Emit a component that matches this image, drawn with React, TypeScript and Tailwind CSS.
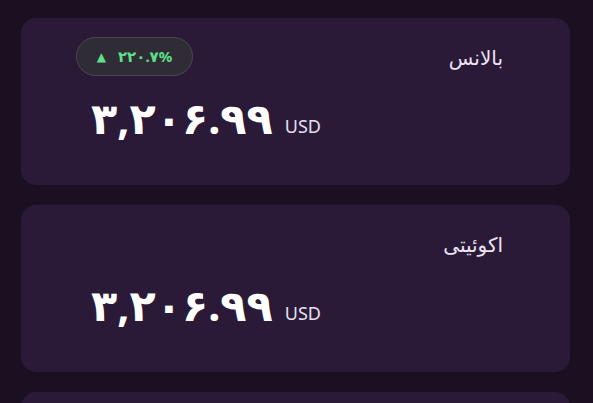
import React from "react";

const cards = [
  { label: "بالانس", value: "۳,۲۰۶.۹۹", change: "۲۲۰.۷%" },
  { label: "اکوئیتی", value: "۳,۲۰۶.۹۹" },
];

export default function App() {
  return (
    <div
      className="bg-[#1b1021] pl-[21px] pr-[23px] pt-[18px] flex flex-col gap-5 overflow-hidden h-[403px]"
      style={{ fontFamily: '"Noto Sans", "DejaVu Sans", sans-serif' }}
    >
      {cards.map((card) => (
        <div
          key={card.label}
          className="shrink-0 h-[167px] rounded-[15px] bg-[#2a1a37] pl-[55px] pr-[67px] pt-[19px]"
        >
          {/* Top row: change badge + label */}
          <div className="flex items-center justify-between h-[39px]">
            {card.change ? (
              <div className="h-[39px] w-[117px] rounded-full bg-[#2f2c36] border border-[#4a4851] flex items-center justify-center gap-3 text-[#5ee08a] text-[15px] font-bold">
                <span className="text-[12px]">▲</span>
                <span dir="rtl">{card.change}</span>
              </div>
            ) : (
              <div />
            )}
            <span dir="rtl" className="text-[20px] text-[#ece4f2] mt-[2px]">
              {card.label}
            </span>
          </div>

          {/* Value */}
          <div className="mt-[20px] flex items-end gap-3 pl-[15px]">
            <span className="text-[43px] font-bold leading-none text-white">
              {card.value}
            </span>
            <span className="text-[18px] text-[#e6e0ee] leading-none mb-[4px]">USD</span>
          </div>
        </div>
      ))}

      {/* next card, only its top edge is in view */}
      <div className="shrink-0 h-[167px] rounded-[15px] bg-[#2a1a37]" />
    </div>
  );
}
